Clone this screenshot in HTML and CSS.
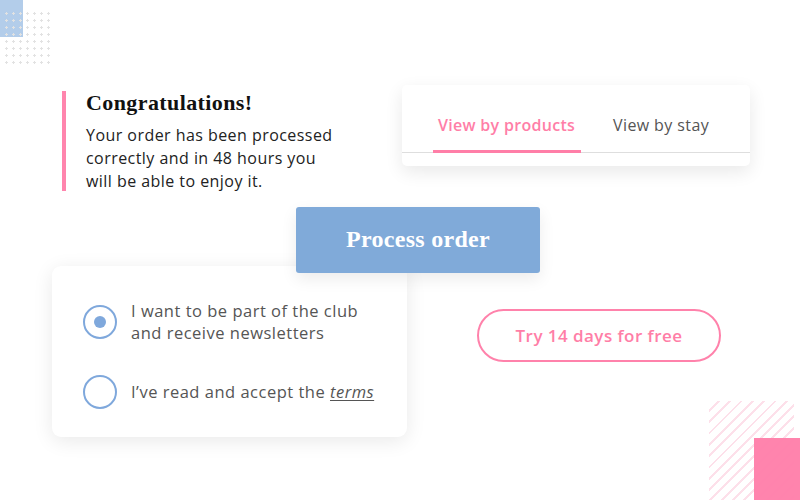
FILE: index.html
```html
<!DOCTYPE html>
<html>
<head>
<meta charset="utf-8">
<link rel="stylesheet" href="styles.css">
</head>
<body>
<div class="canvas">
  <div class="deco-blue"></div>
  <div class="deco-dots"></div>
  <div class="deco-stripes"></div>
  <div class="deco-pink"></div>

  <div class="congrats">
    <h1 class="congrats-title">Congratulations!</h1>
    <p class="congrats-text">Your order has been processed<br>correctly and in 48 hours you<br>will be able to enjoy it.</p>
  </div>

  <div class="tabs-card">
    <div class="tabs">
      <div class="tab tab-active">View by products</div>
      <div class="tab">View by stay</div>
    </div>
  </div>

  <div class="options-card">
    <div class="option">
      <span class="radio radio-checked"></span>
      <span class="option-label">I want to be part of the club<br>and receive newsletters</span>
    </div>
    <div class="option">
      <span class="radio"></span>
      <span class="option-label">I’ve read and accept the <em class="terms">terms</em></span>
    </div>
  </div>

  <button class="process-btn">Process order</button>

  <button class="trial-btn">Try 14 days for free</button>
</div>
</body>
</html>
```

FILE: styles.css
```css
* { box-sizing: border-box; }
html, body { margin: 0; padding: 0; background: #fff; }
body { font-family: "Open Sans", "Lato", sans-serif; color: #4a4a4a; }

.canvas { position: relative; width: 800px; height: 500px; overflow: hidden; background: #fff; }

.deco-blue { position: absolute; left: 0; top: 0; width: 23px; height: 37px; background: #b3cdea; }
.deco-dots {
  position: absolute; left: 3px; top: 10px; width: 48px; height: 54px;
  background-image: radial-gradient(circle, #e2e2e2 1px, transparent 1.3px);
  background-size: 7px 7px;
}
.deco-stripes {
  position: absolute; left: 709px; top: 401px; width: 85px; height: 99px;
  background: repeating-linear-gradient(135deg, transparent 0 6px, #fde0ea 6px 8px);
}
.deco-pink { position: absolute; left: 754px; top: 438px; width: 46px; height: 62px; background: #ff7faa; opacity: 0.96; }

.congrats {
  position: absolute; left: 62px; top: 91px; width: 290px; height: 100px;
  border-left: 4px solid #ff85ad; padding-left: 20px;
}
.congrats-title {
  margin: 0; font-family: "Liberation Serif", "DejaVu Serif", serif; font-weight: bold;
  font-size: 22px; line-height: 24px; color: #111; letter-spacing: 0.4px;
}
.congrats-text { margin: 9px 0 0; font-size: 16px; line-height: 23px; color: #222; letter-spacing: 0.45px; }

.tabs-card {
  position: absolute; left: 402px; top: 85px; width: 348px; height: 81px;
  background: #fff; border-radius: 5px;
  box-shadow: 0 6px 18px rgba(0,0,0,0.09);
  padding-top: 27px;
}
.tabs { display: flex; border-bottom: 1px solid #dedede; padding-left: 31px; gap: 27px; height: 41px; }
.tab { font-size: 16px; line-height: 26px; color: #555; padding: 0 5px; letter-spacing: 0.4px; }
.tab-active { color: #ff7ea7; font-weight: 600; border-bottom: 3px solid #ff7ea7; height: 41px; width: 148px; letter-spacing: 0.3px; }

.options-card {
  position: absolute; left: 52px; top: 266px; width: 355px; height: 171px;
  background: #fff; border-radius: 9px;
  box-shadow: 0 4px 20px rgba(0,0,0,0.09);
  padding: 34px 0 0 31px;
  display: flex; flex-direction: column; gap: 31px;
}
.option { display: flex; align-items: center; gap: 14px; }
.radio {
  width: 34px; height: 34px; border-radius: 50%; border: 2px solid #7fa8dc; flex: none;
  display: flex; align-items: center; justify-content: center;
}
.radio-checked::after { content: ""; width: 12px; height: 12px; border-radius: 50%; background: #7fa8dc; }
.option-label { font-size: 16.5px; line-height: 22px; color: #555; letter-spacing: 0.5px; }
.terms { text-decoration: underline; text-underline-offset: 2px; }

.process-btn {
  position: absolute; left: 296px; top: 207px; width: 244px; height: 66px;
  background: #80aad9; border: none; border-radius: 3px; color: #fff;
  font-family: "Liberation Serif", "DejaVu Serif", serif; font-weight: bold; font-size: 24px; letter-spacing: 0.3px;
  padding-bottom: 3px;
  box-shadow: 0 6px 16px rgba(0,0,0,0.08);
  z-index: 2;
}

.trial-btn {
  position: absolute; left: 477px; top: 309px; width: 244px; height: 53px;
  background: #fff; border: 2px solid #ff82ab; border-radius: 27px;
  color: #ff7ea7; font-family: "Open Sans", sans-serif; font-weight: 600; font-size: 17px; letter-spacing: 0.45px;
}
```
